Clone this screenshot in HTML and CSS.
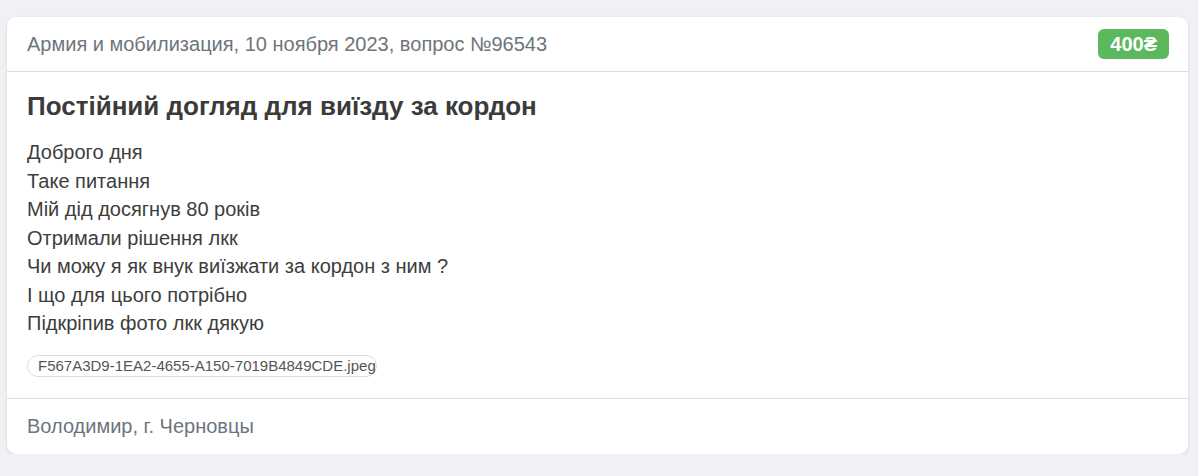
FILE: index.html
```html
<!DOCTYPE html>
<html lang="ru">
<head>
<meta charset="utf-8">
<link rel="stylesheet" href="styles.css">
</head>
<body>
<div class="page">
  <div class="card">
    <div class="card-header">
      <span class="meta">Армия и мобилизация, 10 ноября 2023, вопрос №96543</span>
      <span class="price">400₴</span>
    </div>
    <div class="card-body">
      <h1 class="title">Постійний догляд для виїзду за кордон</h1>
      <div class="text">
        <div>Доброго дня</div>
        <div>Таке питання</div>
        <div>Мій дід досягнув 80 років</div>
        <div>Отримали рішення лкк</div>
        <div>Чи можу я як внук виїзжати за кордон з ним ?</div>
        <div>І що для цього потрібно</div>
        <div>Підкріпив фото лкк дякую</div>
      </div>
      <div class="files">
        <span class="file">F567A3D9-1EA2-4655-A150-7019B4849CDE.jpeg</span>
      </div>
    </div>
    <div class="card-footer">Володимир, г. Черновцы</div>
  </div>
</div>
</body>
</html>
```

FILE: styles.css
```css
html, body {
  margin: 0;
  padding: 0;
  background: #f0f1f5;
  font-family: "Liberation Sans", Arial, sans-serif;
}
.page {
  padding: 17px 10px 0 7px;
}
.card {
  background: #fff;
  border-radius: 9px;
  box-shadow: 0 1px 3px rgba(0,0,0,0.12);
  overflow: hidden;
}
.card-header {
  height: 55px;
  box-sizing: border-box;
  padding: 0 19px 0 20px;
  display: flex;
  align-items: center;
  justify-content: space-between;
  border-bottom: 1px solid #dedede;
}
.meta {
  font-size: 20px;
  color: #6c757d;
}
.price {
  background: #5cb85c;
  color: #fff;
  font-weight: bold;
  font-size: 20px;
  height: 30px;
  line-height: 30px;
  padding: 0 12px;
  border-radius: 6px;
}
.card-body {
  padding: 19px 20px 21px 20px;
  border-bottom: 1px solid #dedede;
}
.title {
  margin: 0 0 17px 0;
  font-size: 26px;
  line-height: 30px;
  font-weight: bold;
  color: #3b3b3b;
}
.text {
  font-size: 20px;
  line-height: 28.5px;
  color: #3d3d3d;
}
.files {
  margin-top: 17px;
  display: flex;
}
.file {
  display: inline-block;
  font-size: 15px;
  line-height: 20px;
  color: #555;
  border: 1px solid #ddd;
  border-radius: 11px;
  padding: 0 0 0 10px;
  white-space: nowrap;
}
.card-footer {
  height: 55px;
  box-sizing: border-box;
  padding: 0 20px;
  display: flex;
  align-items: center;
  font-size: 20px;
  color: #6c757d;
}
```
